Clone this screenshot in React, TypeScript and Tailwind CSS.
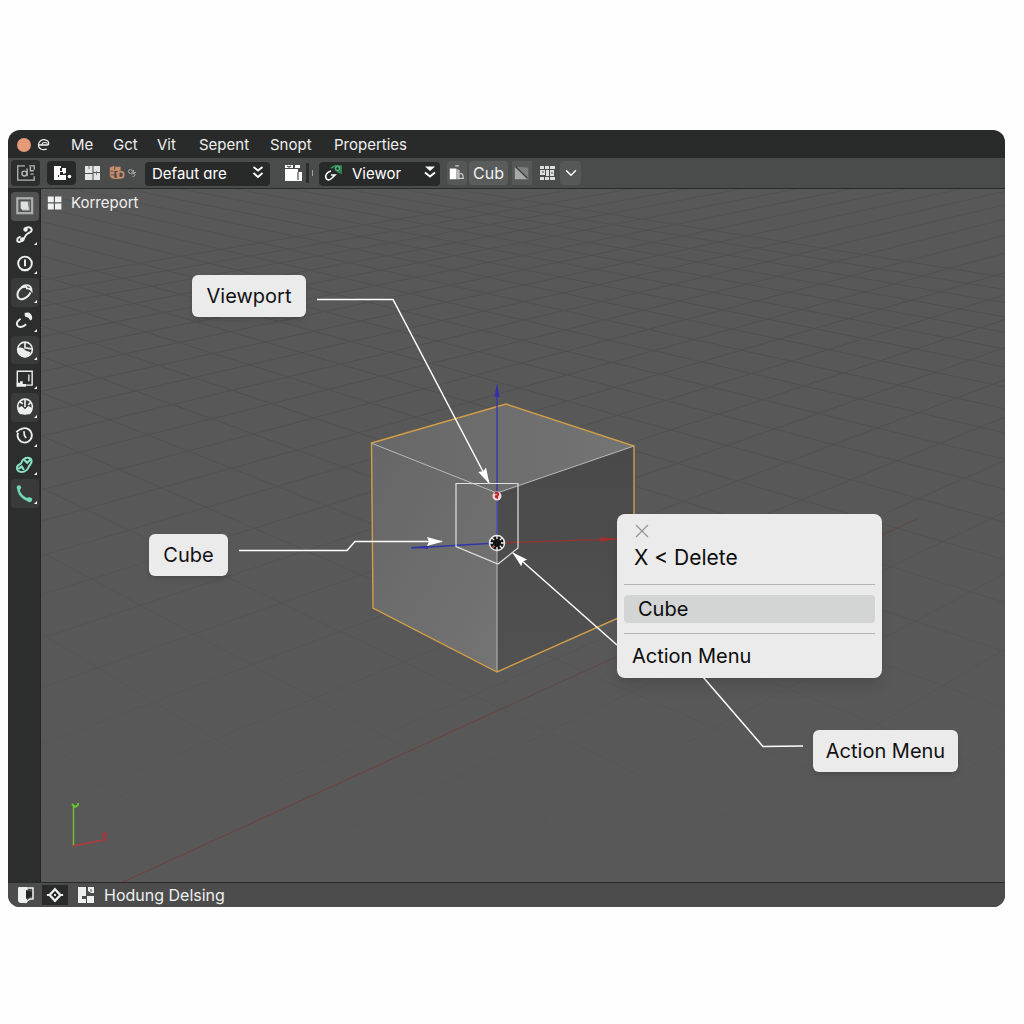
import type { ReactNode } from 'react';
import { ChevronDown } from 'lucide-react';

const menuItems = [
  { label: 'Me', className: 'w-[42px]' },
  { label: 'Gct', className: 'w-11' },
  { label: 'Vit', className: 'w-[42px]' },
  { label: 'Sepent', className: 'w-[71px]' },
  { label: 'Snopt', className: 'w-16' },
  { label: 'Properties', className: 'w-20' },
];

function Icon({ children, className = 'size-5' }: { children: ReactNode; className?: string }) {
  return (
    <svg viewBox="0 0 20 20" fill="none" stroke="currentColor" strokeWidth="2" className={`shrink-0 ${className}`} aria-hidden="true">
      {children}
    </svg>
  );
}

const solid = { fill: 'currentColor', stroke: 'none' };

const tools = [
  {
    name: 'Select box',
    active: true,
    icon: (
      <>
        <rect x="3" y="3" width="13.500" height="13.500" stroke="#aeb0b0" strokeWidth="2" />
        <path d="M6 6h7v3l1 5H8L6 12z" fill="#dfe0e0" stroke="none" />
        <path d="M14 6v8H8" stroke="#8b8d8d" strokeWidth="1" />
      </>
    ),
  },
  {
    name: 'Link',
    icon: (
      <>
        <path d="M10 4.500c2-2.500 7-1.500 6 1.500-.5 2-3 1.500-5 4s-2 4-4 5.500-4.500 1-4-1.500c.2-1.500 1.500-2 3-2.500" strokeWidth="1.800" />
        <circle cx="10.500" cy="5" r="2" {...solid} />
        <circle cx="7.500" cy="14" r="2" {...solid} />
      </>
    ),
  },
  {
    name: 'Cursor',
    icon: (
      <>
        <circle cx="10" cy="9.500" r="6.200" strokeWidth="1.800" />
        <path d="M10 6v6" strokeWidth="1.800" />
        <path d="M7 15.500h6" strokeWidth="2" />
      </>
    ),
  },
  {
    name: 'Rotate',
    raised: true,
    icon: (
      <>
        <path d="M12 5C7 2 2 9 3.500 13.500c1.500 4.500 9 1.500 11.500-4" strokeWidth="1.800" />
        <path d="M7 4.500c4-3.500 9-1.500 9 3.500-1.500-2-3-2.500-5-2" strokeWidth="1.500" />
      </>
    ),
  },
  {
    name: 'Move',
    icon: (
      <>
        <path d="M9.500 3c3-2 7 0 7 4 0 1.500-.5 2-1.500 2.500L13 7l-3-1z" {...solid} />
        <path d="M6 8c-3 2-4 4-3 6s5 2 8-1" strokeWidth="1.800" />
      </>
    ),
  },
  {
    name: 'Shade',
    raised: true,
    icon: (
      <>
        <circle cx="10" cy="9.500" r="6.700" strokeWidth="1.500" />
        <path d="M3.500 8C6 7 9 8 10.500 10.500L15 12c-1 3-3 4.500-5.500 4.500-4 0-7-4-6-8.500z" {...solid} />
        <path d="M10 3v5l6 1" strokeWidth="1.500" />
      </>
    ),
  },
  {
    name: 'Frame',
    icon: (
      <>
        <path d="M3 17V3h13.500v13" strokeWidth="1.300" />
        <path d="M2.500 13.500h3V12H8v2.500h3v2.500H2.500z" {...solid} />
        <path d="M11 15.500h5.500M13.500 6v6" strokeWidth="1.200" />
      </>
    ),
  },
  {
    name: 'Sphere',
    raised: true,
    icon: (
      <>
        <circle cx="10" cy="9.500" r="6.700" strokeWidth="1.500" />
        <path d="M3.500 11L7 9l3 3 3-3 3.500 2v3l-2 2.500h-9L3.500 14z" {...solid} />
        <path d="M10 3v7M5 5l3 2M15 6l-2 2" strokeWidth="1.500" />
      </>
    ),
  },
  {
    name: 'Timer',
    icon: (
      <>
        <path d="M5.500 4.500a6.500 6.500 0 1 1-1.800 2.500" strokeWidth="1.600" />
        <path d="M2 6.500l4-3M9 5.500l.5 4 1.500 2.500" strokeWidth="1.500" />
      </>
    ),
  },
  {
    name: 'Annotate',
    className: 'text-[#8be3c4]',
    icon: (
      <>
        <path d="M5 9.500c3-1 1-3 4-5s7-1 7 2-2 3-3 6-5 4.500-8 3.500-3-5.500 0-6.500z" strokeWidth="1.800" />
        <path d="M9 5l3 3 3-3M4 13.500l3-2 2 3" strokeWidth="2" />
      </>
    ),
  },
  {
    name: 'Measure',
    raised: true,
    className: 'text-[#6fd9b2]',
    icon: (
      <>
        <path d="M4 4.500c0 5 4 10 10 11" strokeWidth="2.200" />
        <circle cx="4.500" cy="4" r="2" {...solid} />
        <path d="M11.500 14c2-2 5-1 5 1s-2 3-4 2z" {...solid} />
      </>
    ),
  },
];

function DoubleChevron() {
  return (
    <Icon className="pointer-events-none absolute right-0.5 top-0.5 size-5">
      <path d="M5.500 4l4.500 3.500L14.500 4M5.500 10l4.500 4 4.500-4" strokeWidth="1.800" />
    </Icon>
  );
}

function Toolbar() {
  return (
    <div className="flex h-[31px] items-center border-b border-[#292a2a] bg-[#4a4b4b] pl-[3px] text-white">
      <button aria-label="Editor type" className="flex h-[26px] w-[29px] items-center justify-center rounded bg-[#2c2d2d] text-[#b4b6b6]">
        <Icon className="size-[22px]">
          <path d="M9 3.500H2.500v13h15V13M13 3.500h4.500V7" strokeWidth="1.200" />
          <circle cx="8.500" cy="10.500" r="2.200" strokeWidth="1.300" />
          <path d="M11 6v7M14 4v4h3M14 11h3" strokeWidth="1.300" />
        </Icon>
      </button>
      <button aria-label="Mode" className="ml-[7px] flex h-6 w-[29px] items-center justify-center rounded bg-[#272828]">
        <Icon>
          <path d="M2 3h7v2h5v5l-3 1v-2H8v3H6v5H2z" {...solid} />
          <path d="M7 12h7v5H4v-3h3z" {...solid} />
          <path d="M8 5h2v3H8z" fill="#272828" stroke="none" />
          <circle cx="17.500" cy="13.500" r="1.800" {...solid} />
        </Icon>
      </button>
      <button aria-label="Layout" className="ml-[7px] text-[#e4e6e6]">
        <Icon>
          <path d="M2 3h7.500v7H2zM10.500 3H17v6h-6.500zM2 11h7.500v6H2zM10.500 10H17v7h-6.500z" {...solid} />
          <path d="M6 3v3M13.500 8v4" stroke="#777979" strokeWidth="1" />
        </Icon>
      </button>
      <button aria-label="Objects" className="ml-[5px] text-[#c78d6c]">
        <Icon className="size-[18px]">
          <path d="M2 4l5-2v14H4l-2-3zM8 3h6v4H8z" {...solid} />
          <circle cx="14" cy="12" r="3.500" />
          <path d="M5 7h7v9H6M9 10h3" strokeWidth="1.500" />
          <path d="M3 8h3M3 12h4" stroke="#5c4539" strokeWidth="1" />
        </Icon>
      </button>
      <Icon className="ml-px size-2.5 text-[#a8aaaa]">
        <circle cx="7" cy="7" r="4" />
        <path d="M13 4v5h5M9 13c2-3 8-2 7 1s-3 3-5 3" />
      </Icon>
      <div className="relative ml-2 h-6 w-[125px]">
        <select aria-label="Workspace" className="size-full appearance-none rounded bg-[#282929] px-[7px] text-[15px] leading-6">
          <option>Defaut ɑre</option>
        </select>
        <DoubleChevron />
      </div>
      <button aria-label="Scene" className="ml-3.5">
        <Icon>
          <path d="M1 6h13v3h4v9H1z" {...solid} />
          <path d="M1 2h8v3H1zM11 2h5v3h-5z" {...solid} />
          <path d="M14 9v8M3 3l2 1 2-1" stroke="#4a4b4b" strokeWidth="1.200" />
        </Icon>
      </button>
      <div className="ml-0.5 mr-1.5 flex h-5 w-[7px] items-center justify-between">
        <span className="h-5 w-[3px] bg-[#2b2c2c]" />
        <span className="h-1.5 w-px bg-[#a0a2a2]" />
      </div>
      <div className="relative h-6 w-[121px]">
        <Icon className="pointer-events-none absolute left-1 top-0.5 size-5">
          <path d="M8 8c-4 1-6 4-5 7 1 3 4 2 6 0l3-3H8" strokeWidth="1.600" />
          <path d="M8 5l4-2h6v7l-4-2" stroke="#35965e" strokeWidth="1.500" />
          <circle cx="14.500" cy="5.500" r="2" stroke="#48b978" strokeWidth="1.500" />
        </Icon>
        <select aria-label="View" className="size-full appearance-none rounded bg-[#282929] pl-[33px] text-[15px] leading-6">
          <option>Viewor</option>
        </select>
        <Icon className="pointer-events-none absolute right-0 top-0.5 size-5">
          <path d="M5 3.500h10L10 8z" {...solid} />
          <path d="M5 9.500l5 4 5-4" />
        </Icon>
      </div>
      <button aria-label="Shading" className="ml-[7px] flex h-6 w-5 items-center justify-center rounded-sm bg-[#565858]">
        <Icon className="size-[18px]">
          <path d="M2 5h7v12H2z" {...solid} />
          <path d="M9 5l4 2v10H9z" fill="#b9bbbb" stroke="none" />
          <path d="M8 2h4M13 11c3-1 4 1 4 5h-6" stroke="#c9cbcb" strokeWidth="1.300" />
        </Icon>
      </button>
      <button className="ml-0.5 h-6 w-[39px] rounded-sm bg-[#5a5c5c] text-base leading-6 text-[#eeefef]">Cub</button>
      <button aria-label="Falloff" className="ml-1 flex h-6 w-5 items-center justify-center bg-[#565858]">
        <Icon className="size-[18px]">
          <path d="M2 3v14h15z" fill="#a7a9a9" stroke="none" />
          <path d="M2 3l15 14V4z" fill="#7c7e7e" stroke="none" />
          <path d="M3 3l13 13" stroke="#2e2f2f" strokeWidth="1.200" />
        </Icon>
      </button>
      <button aria-label="Snap grid" className="ml-1.5 text-[#dcdede]">
        <Icon>
          <path d="M2 3h4v3H2zM7 3h4v3H7zM12 3h5v3h-5zM2 7h5v5H2zM8 7h3v6H8zM12 7h4v6h-4zM2 14h4v3H2zM7 14h4v3H7zM12 14h5v3h-5z" {...solid} />
          <path d="M4 9h2M13 10h2" stroke="#4a4b4b" strokeWidth="1" />
        </Icon>
      </button>
      <button aria-label="More options" className="ml-0.5 flex h-6 w-[21px] items-center justify-center rounded-sm bg-[#565858]">
        <ChevronDown className="size-[18px]" />
      </button>
    </div>
  );
}

function Sidebar() {
  return (
    <aside className="w-[33px] shrink-0 border-r border-[#222323] bg-[#2c2d2d] pl-[3px] pr-px pt-[3px]">
      <div className="grid h-[316px] grid-rows-11">
        {tools.map((tool) => (
          <button
            key={tool.name}
            aria-label={tool.name}
            className={`relative flex items-center justify-center rounded ${tool.active ? 'bg-[#515353]' : tool.raised ? 'bg-[#393b3b]' : ''} ${tool.className ?? 'text-[#eceeee]'}`}
          >
            <Icon className="size-[22px]">{tool.icon}</Icon>
            {!tool.active && (
              <svg viewBox="0 0 4 4" className="absolute bottom-1 right-0.5 size-[3px] fill-white" aria-hidden="true">
                <path d="M4 0v4H0z" />
              </svg>
            )}
          </button>
        ))}
      </div>
    </aside>
  );
}

// Both line families run to a vanishing point above the viewport.
const gridLines = Array.from({ length: 30 }, (_, i) => i);

function Scene() {
  return (
    <svg viewBox="41 189 964 693" preserveAspectRatio="xMinYMin slice" className="absolute inset-0 size-full" aria-hidden="true">
      <defs>
        <linearGradient id="fade" gradientUnits="userSpaceOnUse" x1="0" y1="189" x2="0" y2="882">
          <stop offset="0" stopColor="#fff" stopOpacity="0.4" />
          <stop offset="0.25" stopColor="#fff" stopOpacity="0.55" />
          <stop offset="0.7" stopColor="#fff" stopOpacity="0.2" />
          <stop offset="1" stopColor="#fff" stopOpacity="0" />
        </linearGradient>
        <mask id="gridMask" maskUnits="userSpaceOnUse" x="41" y="189" width="964" height="693">
          <rect x="41" y="189" width="964" height="693" fill="url(#fade)" />
        </mask>
        <linearGradient id="top" x1="0" y1="0" x2="1" y2="0">
          <stop offset="0" stopColor="#666766" />
          <stop offset="1" stopColor="#737473" />
        </linearGradient>
        <linearGradient id="left" x1="0" y1="0" x2="1" y2="1">
          <stop offset="0" stopColor="#656665" />
          <stop offset="1" stopColor="#737473" />
        </linearGradient>
        <linearGradient id="right" x1="0" y1="0" x2="0" y2="1">
          <stop offset="0" stopColor="#484948" />
          <stop offset="1" stopColor="#505150" />
        </linearGradient>
        <marker id="arrow" viewBox="0 0 16 10" refX="15" refY="5" markerWidth="16" markerHeight="10" markerUnits="userSpaceOnUse" orient="auto">
          <path d="M0 0.500l16 4.500-16 4.500 2-4.500z" fill="#fff" />
        </marker>
      </defs>
      <rect x="41" y="189" width="964" height="693" fill="#575857" />
      <g mask="url(#gridMask)" stroke="#484948" strokeWidth="1">
        {gridLines.map((i) => (
          <path key={i} d={`M2273 -100L${-3600 + i * 190} 900M-1100 -60L${-1200 + i * 210} 900`} />
        ))}
      </g>
      <path d="M123 882L497 711" stroke="#703f3e" />
      <path d="M497 711L640 646M882 535l37-17" stroke="#683f3e" strokeOpacity="0.7" />

      <path d="M371 443L506 404 634 446 497 493z" fill="url(#top)" />
      <path d="M371 443L497 493V672L373 608z" fill="url(#left)" />
      <path d="M497 493L634 446V611L497 672z" fill="url(#right)" />
      <path d="M371 443L497 493 634 446M497 493V672" fill="none" stroke="#b9bbba" />
      <path d="M371.500 443L506 404 634 446V611L497 672 373 608z" fill="none" stroke="#d29e47" strokeWidth="1.400" />

      <path d="M497 543V390M497 543L411 548" stroke="#3436aa" strokeWidth="1.300" />
      <path d="M497 383l2.500 14h-5zM411 547l17-1v3z" fill="#3032ad" />
      <path d="M497 543L617 539" stroke="#9e302f" strokeWidth="1.200" />
      <path d="M600 537l17 2-17 3z" fill="#9e302f" />
      <path d="M456 483.500H518V548L498 564 456 546.500z" fill="none" stroke="#dfe1e0" strokeWidth="1.200" />

      <circle cx="497" cy="496" r="4.500" fill="#f3dada" />
      <path d="M495 494c1-2 4-1 3 1s-3 0-2 2l2 1" fill="none" stroke="#bd2435" strokeWidth="2" />
      <circle cx="497" cy="543" r="7.500" fill="#151515" stroke="#eee" strokeWidth="1.500" />
      <path d="M497 536v14M490 543h14M492 538l10 10M502 538l-10 10" stroke="#eee" strokeWidth="1.400" strokeDasharray="3 8" />
      <circle cx="493" cy="547" r="1.300" fill="#a04053" />

      <g fill="none" stroke="#fff" strokeWidth="1.500">
        <path d="M317 299.500H393L489 483" markerEnd="url(#arrow)" />
        <path d="M239 550.500H347L355 541.500H442" markerEnd="url(#arrow)" />
        <path d="M617 645L513 553" markerEnd="url(#arrow)" />
        <path d="M703 677L763 746.500 803 746" />
      </g>

      <path d="M73.500 846V805" stroke="#78ba37" strokeWidth="1.500" />
      <path d="M72 804l3 3 3-2v-2" fill="none" stroke="#69c829" strokeWidth="1.800" />
      <path d="M73 846L103 840" stroke="#b6383b" strokeWidth="1.500" />
      <path d="M107 833.500c-4-1-5 2-3 3.500s2 3 1 4" fill="none" stroke="#b4303a" strokeWidth="2" />
    </svg>
  );
}

function Callout({ children, className }: { children: ReactNode; className: string }) {
  return (
    <div className={`absolute flex h-[42px] items-center justify-center rounded-md bg-[#ebebeb] text-xl text-[#111] shadow-md ${className}`}>
      {children}
    </div>
  );
}

function ContextMenu() {
  return (
    <div role="menu" className="absolute left-[576px] top-[325px] flex w-[265px] flex-col rounded-lg bg-[#ebebeb] px-[7px] pb-2 pt-2.5 text-xl leading-7 text-[#0c0c0c] shadow-lg">
      <button aria-label="Close" className="ml-[11px] size-3.5 text-[#929494]">
        <svg viewBox="0 0 14 14" className="size-3.5" stroke="currentColor" strokeWidth="1.200" aria-hidden="true">
          <path d="M1 1l12 12M13 1L1 13" />
        </svg>
      </button>
      <button role="menuitem" className="mt-1.5 pl-2.5 text-left text-[21px]">X &lt; Delete</button>
      <hr className="mb-2.5 mt-3 border-[#b5b6b6]" />
      <button role="menuitem" className="rounded bg-[#d3d4d4] pl-3.5 text-left">Cube</button>
      <hr className="mb-2 mt-2.5 border-[#b5b6b6]" />
      <button role="menuitem" className="pl-2 text-left">Action Menu</button>
    </div>
  );
}

export default function App() {
  return (
    <div className="min-h-screen bg-[#fefefe] pb-8 pl-2 pr-[19px] pt-[130px] font-['Inter',sans-serif]">
      <div className="overflow-hidden rounded-xl bg-[#292a2a]">
        <header className="flex h-7 items-center pl-[9px] pt-0.5 text-[#eeefef]">
          <span className="size-3.5 rounded-full bg-[#e59a78]" />
          <Icon className="ml-1.5 size-[14px]">
            <path d="M3 10h12c3-1 2-6-2-7C7 1 2 5 2 10s5 8 12 6" strokeWidth="1.800" />
            <path d="M7 10c0-4 7-5 8-1" strokeWidth="1.500" />
          </Icon>
          <nav className="ml-5 flex text-[15px] leading-6">
            {menuItems.map((item) => (
              <button key={item.label} className={`text-left ${item.className}`}>{item.label}</button>
            ))}
          </nav>
        </header>

        <Toolbar />

        <div className="flex min-h-[693px]">
          <Sidebar />
          <main className="relative flex-1 overflow-hidden bg-[#575857]">
            <Scene />
            <div className="relative flex items-center gap-2 pl-1.5 pt-0.5 text-[15px] leading-6 text-[#eeefef]">
              <Icon className="size-4">
                <path d="M1 2h7.500v7H1zM10 2h8v7h-8zM1 10.500h7.500V18H1zM10 10.500h8V18h-8z" {...solid} />
              </Icon>
              Korreport
            </div>
            <Callout className="left-[151px] top-[86px] w-[114px]">Viewport</Callout>
            <Callout className="left-[108px] top-[345px] w-[79px]">Cube</Callout>
            <Callout className="left-[772px] top-[541px] w-[145px]">Action Menu</Callout>
            <ContextMenu />
          </main>
        </div>

        <footer className="flex h-[25px] items-center border-t border-[#292a2a] bg-[#4b4c4b] pl-2 text-[#eeefef]">
          <button aria-label="Panel">
            <Icon>
              <path d="M3 2h8v16H5c-2 0-3-1-3-3V5c0-2 0-3 1-3z" {...solid} />
              <path d="M11 3h6v11h-3l-4 3z" strokeWidth="1.500" />
              <path d="M10 5l6 2v4l-6 3z" fill="#242525" stroke="none" />
            </Icon>
          </button>
          <button aria-label="Keyframe" className="ml-1.5 flex h-5 w-[26px] items-center justify-center bg-[#292a2a]">
            <Icon className="size-[18px]">
              <path d="M10 3.500l6 6.500-6 6.500L4 10z" strokeWidth="2.500" />
              <path d="M1 10h3M16 10h3M9 10h2" />
            </Icon>
          </button>
          <Icon className="ml-2 size-5">
            <path d="M2 2h8v9H6v3h4v4H2zM11 11h7v7h-7z" {...solid} />
            <path d="M12 2h6v6h-3l-3-2z" {...solid} />
            <path d="M15 4v3" stroke="#4b4c4b" strokeWidth="1" />
          </Icon>
          <span className="ml-2 text-base leading-6">Hodung Delsing</span>
        </footer>
      </div>
    </div>
  );
}
